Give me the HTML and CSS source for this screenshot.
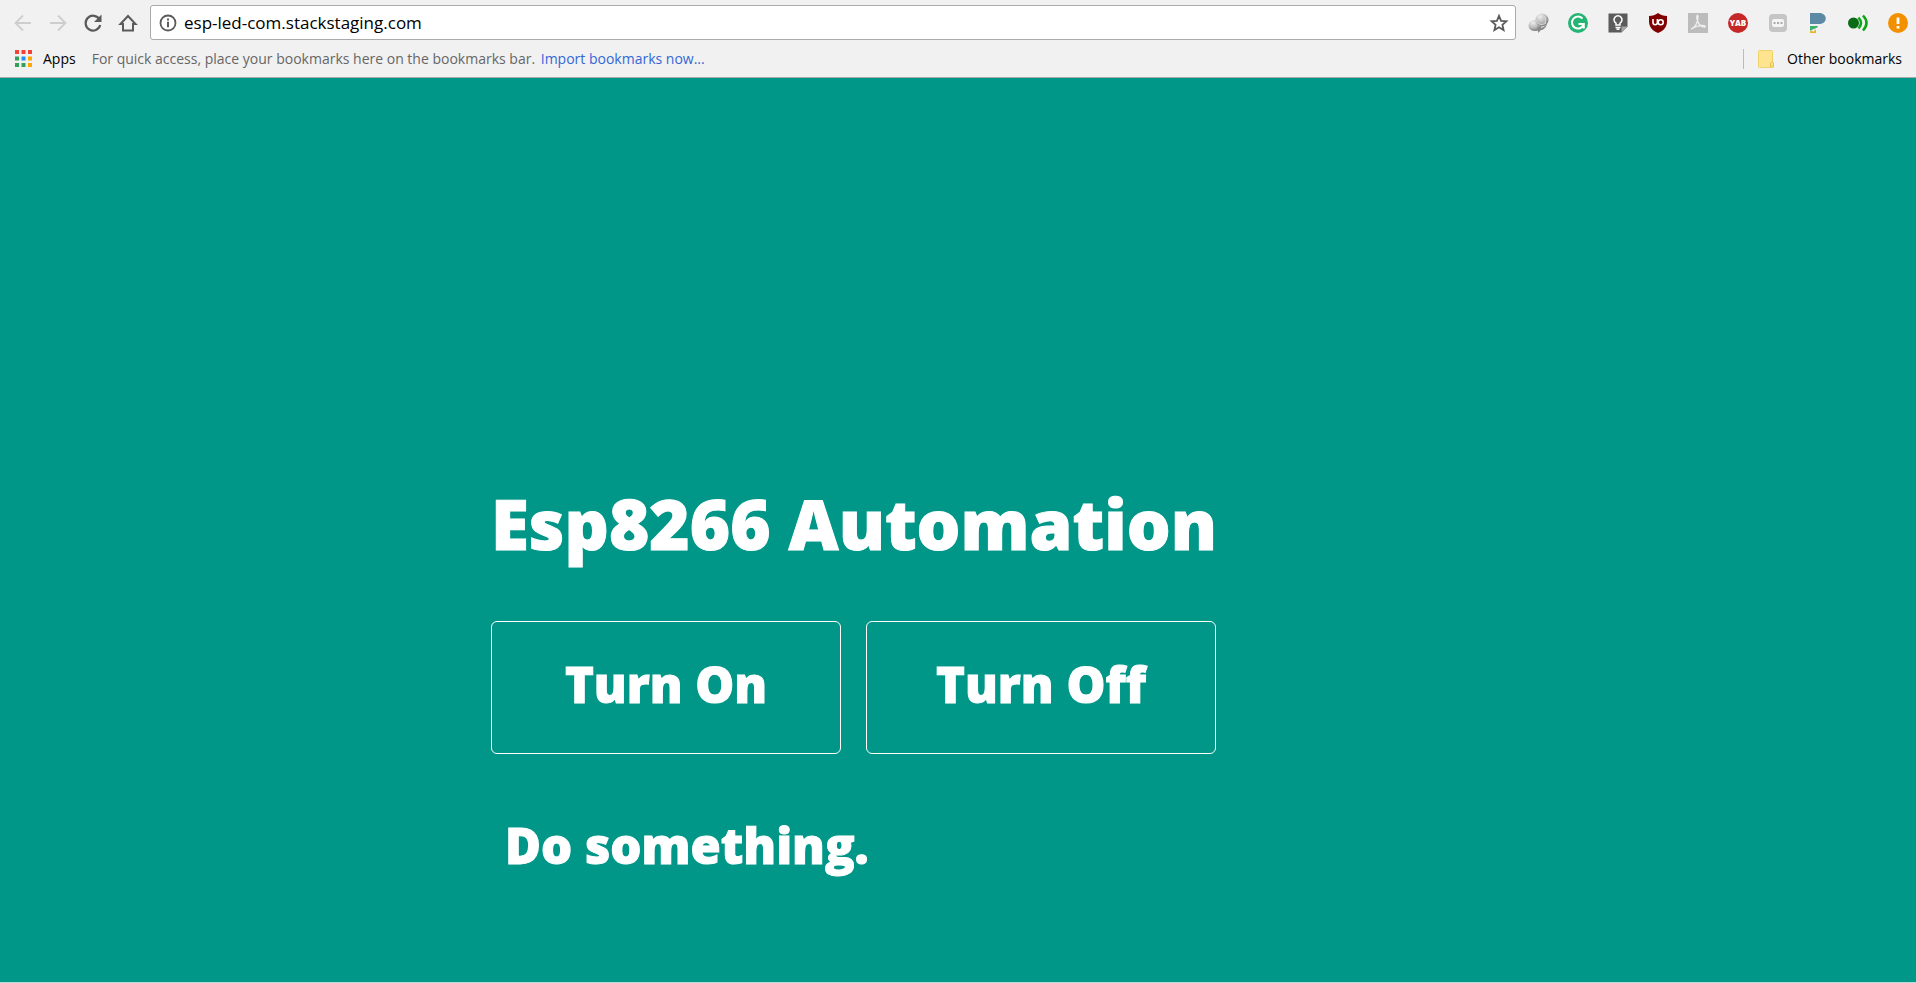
FILE: index.html
```html
<!DOCTYPE html>
<html lang="en">
<head>
<meta charset="utf-8">
<title>Esp8266 Automation</title>
<link rel="stylesheet" href="styles.css">
</head>
<body>
<header class="browser">
  <div class="toolbar">
    <nav class="controls" aria-label="Navigation">
      <button class="icon-button faded" aria-label="Back"><svg viewBox="0 0 24 24"><path d="M20 12H5M12 4.500L4.500 12l7.500 7.500" fill="none" stroke="currentColor" stroke-width="1.800"/></svg></button>
      <button class="icon-button faded" aria-label="Forward"><svg viewBox="0 0 24 24"><path d="M4 12h15M12 4.500l7.500 7.500-7.500 7.500" fill="none" stroke="currentColor" stroke-width="1.800"/></svg></button>
      <button class="icon-button" aria-label="Reload"><svg viewBox="0 0 24 24"><path d="M18.500 8.500A7.400 7.400 0 1 0 19.200 14" fill="none" stroke="currentColor" stroke-width="2.200"/><path d="M20.500 3.500v7.500H13z" fill="currentColor"/></svg></button>
      <button class="icon-button" aria-label="Home"><svg viewBox="0 0 24 24"><path d="M4.500 13L12 5l7.500 8H17v6.500H7V13z" fill="none" stroke="currentColor" stroke-width="2"/></svg></button>
    </nav>
    <form class="omnibox">
      <button type="button" class="icon-button" aria-label="Site information"><svg viewBox="0 0 24 24"><circle cx="12" cy="12" r="7.500" fill="none" stroke="currentColor" stroke-width="1.800"/><path d="M12 10.800v5.400M12 7.400v2" stroke="currentColor" stroke-width="2"/></svg></button>
      <input class="address" type="text" aria-label="Address" value="esp-led-com.stackstaging.com">
      <button type="button" class="icon-button" aria-label="Bookmark this page"><svg viewBox="0 0 24 24"><path d="M12 4.800l2.100 5 5.300.5-4 3.500 1.200 5.300L12 16.300l-4.600 2.800 1.200-5.300-4-3.500 5.300-.5z" fill="none" stroke="currentColor" stroke-width="1.800"/></svg></button>
    </form>
    <div class="extensions">
      <button class="icon-button" aria-label="Globe extension"><svg viewBox="0 0 24 24"><defs><radialGradient id="silver" cx=".35" cy=".25" r=".8"><stop offset="0" stop-color="#eee"/><stop offset=".55" stop-color="#bbb"/><stop offset="1" stop-color="#777"/></radialGradient></defs><ellipse cx="9" cy="14.500" rx="6.500" ry="5.500" fill="url(#silver)"/><circle cx="16" cy="9" r="6.500" fill="url(#silver)"/><path d="M11 15c3 3 7 2 10-2-1 4-4 6-6 6l-3 3v-4z" fill="#888"/><path d="M10 9c1 4 5 6 10 3M16 3c3 2 4 5 3 9" fill="none" stroke="#ddd"/></svg></button>
      <button class="icon-button" aria-label="Grammar checker"><svg viewBox="0 0 24 24"><circle cx="12" cy="12" r="10" fill="#24b574"/><path d="M16.500 7.600A6 6 0 1 0 17.500 14M12.500 13h5.300v4.500" fill="none" stroke="#fff" stroke-width="2"/></svg></button>
      <button class="icon-button" aria-label="Keep notes"><svg viewBox="0 0 24 24"><path d="M2.500 2.500h19v13l-6 6h-13z" fill="#5b5b5b"/><path d="M15.500 21.500v-6h6z" fill="#a5a5a5"/><path d="M10 14v-1.800a4 4 0 1 1 4 0V14z" fill="none" stroke="#fff" stroke-width="1.500"/><path d="M9.500 16.500h5M10.500 18.300h3" stroke="#fff" stroke-width="1.400"/></svg></button>
      <button class="icon-button" aria-label="Shield blocker"><svg viewBox="0 0 24 24"><path d="M12 2c2.500 2 5.500 3 9 3v5c0 6-3 9.500-9 12-6-2.500-9-6-9-12V5c3.500 0 6.500-1 9-3z" fill="#800000"/><path d="M7 8v3.500a2.200 2.200 0 0 0 4.400 0V8" fill="none" stroke="#fff" stroke-width="1.600"/><circle cx="14.700" cy="11.300" r="2.500" fill="none" stroke="#fff" stroke-width="1.600"/></svg></button>
      <button class="icon-button" aria-label="PDF tools"><svg viewBox="0 0 24 24"><path d="M2 2h20v20H2z" fill="#bcbcbc"/><path d="M5 18c4-1 7-7 7-12 0-3-2-2-1 2 1 5 4 8 8 8 2-2-6-3-14 2" fill="none" stroke="#eee" stroke-width="1.300"/></svg></button>
      <button class="icon-button" aria-label="YAB"><svg viewBox="0 0 24 24"><circle cx="12" cy="12" r="10" fill="#c62828"/><text class="yab" x="12" y="15">YAB</text></svg></button>
      <button class="icon-button" aria-label="Password extension"><svg viewBox="0 0 24 24"><rect x="3" y="3" width="18" height="18" rx="4" fill="#c5c5c5"/><rect x="6" y="8" width="12" height="8" rx="2" fill="#f4f4f4"/><path d="M7.500 12h9" stroke="#aaa" stroke-width="2" stroke-dasharray="2 1.500"/></svg></button>
      <button class="icon-button" aria-label="P extension"><svg viewBox="0 0 24 24"><path d="M4 2h9c9 0 9 11 0 11H4z" fill="#5b89a6"/><path d="M4 15h8c-1 3-4 2-8 5z" fill="#3db06b"/><path d="M4 22c0-3 2-3 3-1l3-3v4z" fill="#e8b52b"/></svg></button>
      <button class="icon-button" aria-label="Sound extension"><svg viewBox="0 0 24 24"><circle cx="7.500" cy="12" r="5.500" fill="#0b6b16"/><path d="M12.500 6.500q5 5.500 0 11M17 4.500q7 7.500 0 15" fill="none" stroke="#0aa512" stroke-width="2.500"/></svg></button>
      <button class="icon-button" aria-label="Browser update"><svg viewBox="0 0 24 24"><circle cx="12" cy="12" r="10" fill="#f39000"/><path d="M12 6.500v6.500M12 15v2.500" stroke="#fff" stroke-width="2.800"/></svg></button>
    </div>
  </div>
  <div class="bookmarks">
    <button class="bookmark">
      <svg class="apps-icon" viewBox="0 0 17 17"><path d="M0 0h4v4H0zM6.500 0h4v4h-4zM13 0h4v4h-4z" fill="#f44336"/><path d="M0 6.500h4v4H0zM0 13h4v4H0zM6.500 13h4v4h-4z" fill="#34a05a"/><path d="M6.500 6.500h4v4h-4z" fill="#2490f5"/><path d="M13 6.500h4v4h-4zM13 13h4v4h-4z" fill="#fca800"/></svg>
      Apps
    </button>
    <p class="hint">For quick access, place your bookmarks here on the bookmarks bar. <a class="import" href="#import">Import bookmarks now...</a></p>
    <button class="bookmark other">
      <svg class="folder-icon" viewBox="0 0 16 18"><path d="M.5 1.500q0-1 1-1h12q1 0 1 1V12l1 1v3.500q0 1-1 1h-13q-1 0-1-1z" fill="#ffe48f" stroke="#eed26b"/><path d="M12.500 17v-4l1.500-1 1.500 1v3.500z" fill="#ffe07c" stroke="#e6c24f"/></svg>
      Other bookmarks
    </button>
  </div>
</header>
<main class="page">
  <section class="panel">
    <h1 class="title">Esp8266 Automation</h1>
    <div class="actions">
      <button class="action">Turn On</button>
      <button class="action">Turn Off</button>
    </div>
    <p class="status">Do something.</p>
  </section>
</main>
</body>
</html>
```
FILE: styles.css
```css
* { box-sizing: border-box; }

body {
  display: flex;
  flex-direction: column;
  min-height: 100vh;
  margin: 0;
  background: #009688;
}

button, input {
  margin: 0;
  padding: 0;
  border: 0;
  background: none;
  color: inherit;
  font: inherit;
}

.browser {
  border-bottom: 1px solid #aaaaaa;
  background: #f1f1f1;
  color: #000000;
  font-family: "Open Sans", "Noto Sans", sans-serif;
  font-size: 14px;
}

.toolbar {
  display: flex;
  align-items: center;
  gap: 10px;
  padding: 5px 6px 0 11px;
}

.controls { display: flex; gap: 11px; }

.extensions { display: flex; gap: 16px; }

.icon-button {
  flex: none;
  width: 24px;
  height: 24px;
  color: #5a5a5a;
}

.icon-button svg { display: block; }

.faded { color: #cecece; }

.yab {
  fill: #ffffff;
  font-size: 8px;
  font-weight: 800;
  text-anchor: middle;
}

.omnibox {
  display: flex;
  flex: 1;
  align-items: center;
  gap: 4px;
  height: 35px;
  padding: 0 4px 0 5px;
  border: 1px solid #aaaaaa;
  border-radius: 3px;
  background: #ffffff;
}

.address {
  flex: 1;
  min-width: 0;
  font-size: 17px;
}

.bookmarks {
  display: flex;
  align-items: center;
  gap: 16px;
  height: 37px;
  padding: 0 14px 0 15px;
}

.bookmark {
  display: flex;
  align-items: center;
  gap: 11px;
  white-space: nowrap;
}

.apps-icon { width: 17px; height: 17px; }

.folder-icon { width: 16px; height: 18px; }

.hint { flex: 1; margin: 0; color: #666666; }

.import { margin-left: 2px; color: #3367d6; text-decoration: none; }

.other {
  gap: 13px;
  height: 20px;
  padding-left: 14px;
  border-left: 1px solid #bbbbbb;
}

.page {
  flex: 1;
  padding: 401px 32px 0 491px;
  border-bottom: 1px solid #b2dfdb;
  color: #ffffff;
  font-family: "Open Sans", "Noto Sans", sans-serif;
  font-weight: 800;
  font-variant-ligatures: none;
  -webkit-text-stroke: 1px #ffffff;
}

.panel { max-width: 725px; }

.title {
  margin: 0 0 54px;
  font-size: 69px;
  font-weight: 800;
  line-height: 88px;
  white-space: nowrap;
}

.actions {
  display: grid;
  grid-template-columns: 1fr 1fr;
  gap: 25px;
}

.action {
  height: 133px;
  padding-bottom: 8px;
  border: 1px solid #ffffff;
  border-radius: 6px;
  font-size: 49px;
}

.status {
  margin: 61px 14px 0;
  font-size: 49px;
  line-height: 60px;
}
```
